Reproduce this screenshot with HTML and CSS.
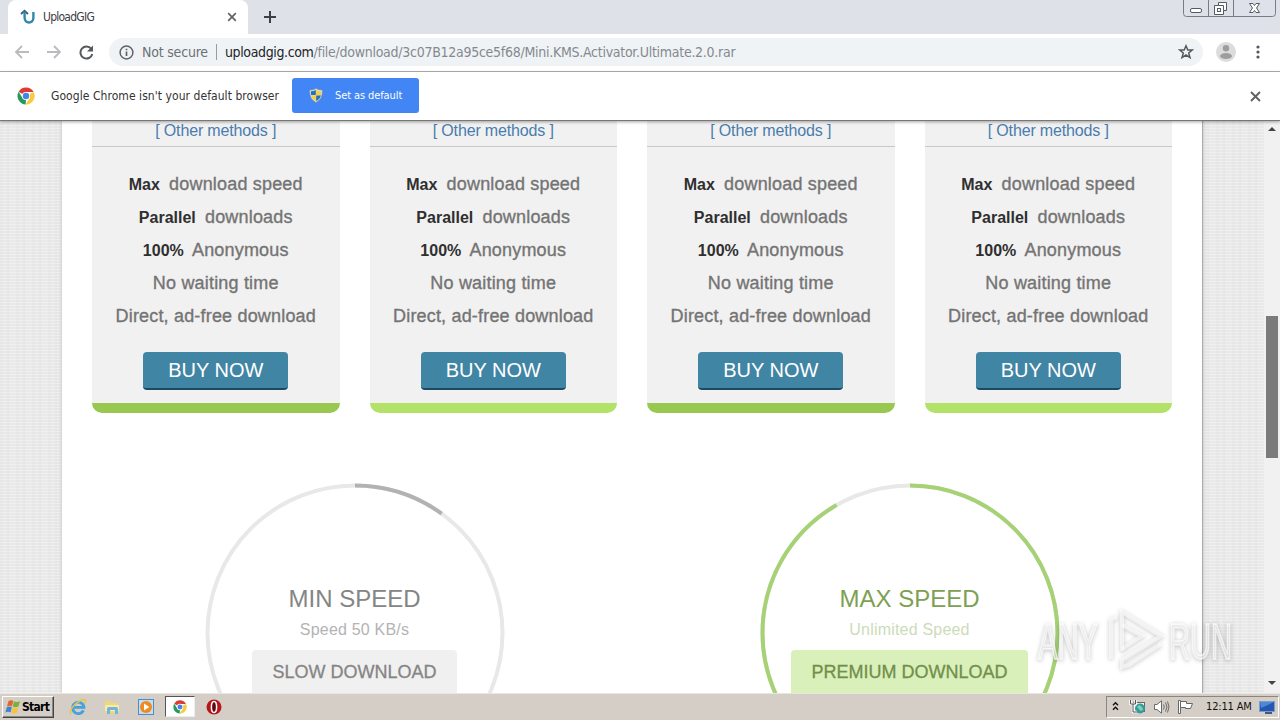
FILE: index.html
```html
<!DOCTYPE html>
<html lang="en">

<head>
    <meta charset="UTF-8">
    <meta name="viewport" content="width=device-width, initial-scale=1.0">
    <title>UploadGIG</title>
    <link rel="stylesheet" href="styles.css">
</head>

<body>
    <svg width="0" height="0" class="defs">
        <symbol id="chrome" viewBox="0 0 18 18">
            <circle cx="9" cy="9" r="8.5" fill="#fff" />
            <path d="M9 9L1.6 4.8A8.5 8.5 0 0 1 16.6 5H9Z" fill="#de3b30" />
            <path d="M9 9L16.6 5A8.5 8.5 0 0 1 8.6 17.5L12.6 11Z" fill="#f8ca3e" />
            <path d="M1.6 4.8L5.5 11L9 13L8.6 17.5A8.5 8.5 0 0 1 1.6 4.8Z" fill="#24995a" />
            <circle cx="9" cy="9" r="4.1" fill="#fff" />
            <circle cx="9" cy="9" r="3.2" fill="#4284ea" />
        </symbol>
    </svg>

    <!-- browser window -->
    <div class="tab-strip">
        <div class="tab">
            <svg class="favicon" width="16" height="16" viewBox="0 0 16 16" fill="none" stroke-width="2.4">
                <path d="M1 5L4.5 1.8L8 5" stroke="#2f5f7c" stroke-width="1.8" />
                <path d="M4.6 2.5V8.8C4.6 15 13.4 15 13.4 8.8V3" stroke="#3288aa" />
            </svg>
            <span class="tab-title">UploadGIG</span>
            <svg width="10" height="10" viewBox="0 0 10 10" stroke="#5f6368" stroke-width="1.7">
                <path d="M1.2 1.2L8.8 8.8M8.8 1.2L1.2 8.8" />
            </svg>
        </div>
        <svg class="new-tab" width="12" height="12" viewBox="0 0 12 12" stroke="#3c4043" stroke-width="2">
            <path d="M6 0V12M0 6H12" />
        </svg>
        <div class="window-buttons">
            <svg width="93" height="17" viewBox="0 0 93 17" fill="none" stroke="#777d86">
                <path d="M.5 0V13.5Q.5 16.5 3.5 16.5H89.5Q92.5 16.5 92.5 13.5V0M25.5 0V16.5M50.5 0V16.5" />
                <rect x="7.5" y="8.5" width="11" height="4" rx="1.5" fill="#fff" stroke="#555b63" />
                <path d="M35.5 2.5H43.5V10.5H40.5V14.5H31.5V5.5H35.5Z" fill="#fff" stroke="#555b63" />
                <path d="M35.5 5.5H40.5V10.5" stroke="#555b63" />
                <rect x="34.5" y="8.5" width="3" height="3" stroke="#555b63" />
                <path d="M66.5 3.5H70L71.5 5.5L73 3.5H76.5L73.5 8L76.5 12.5H73L71.5 10.5L70 12.5H66.5L69.5 8Z" fill="#fff" stroke="#555b63" />
            </svg>
        </div>
    </div>

    <div class="toolbar">
        <svg class="nav" width="16" height="14" viewBox="0 0 16 14" fill="none" stroke="#b9bbbe" stroke-width="1.8">
            <path d="M15 7H2M8 1L2 7L8 13" />
        </svg>
        <svg class="nav" width="16" height="14" viewBox="0 0 16 14" fill="none" stroke="#b9bbbe" stroke-width="1.8">
            <path d="M1 7H14M8 1L14 7L8 13" />
        </svg>
        <svg class="nav reload" width="15" height="15" viewBox="0 0 15 15" fill="none" stroke="#55595e" stroke-width="2">
            <path d="M12.3 4A6 6 0 1 0 13.3 9" />
            <path d="M14 .5V6.5H8Z" fill="#55595e" stroke="none" />
        </svg>
        <div class="omnibox">
            <svg width="15" height="15" viewBox="0 0 15 15" fill="none" stroke="#5f6368" stroke-width="1.5">
                <circle cx="7.5" cy="7.5" r="6.4" />
                <path d="M7.5 6.5V11M7.5 3.8V5.3" stroke-width="1.7" />
            </svg>
            <span class="not-secure">Not secure</span>
            <span class="divider"></span>
            <span class="url"><b>uploadgig.com</b>/file/download/3c07B12a95ce5f68/Mini.KMS.Activator.Ultimate.2.0.rar</span>
            <svg class="star" width="16" height="16" viewBox="0 0 16 16" fill="none" stroke="#55595e" stroke-width="1.5">
                <path d="M8 1.8L9.8 6H14.2L10.7 8.9L12 13.6L8 11L4 13.6L5.3 8.9L1.8 6H6.2Z" />
            </svg>
        </div>
        <svg class="avatar" width="20" height="20" viewBox="0 0 20 20">
            <circle cx="10" cy="10" r="10" fill="#dcdcdc" />
            <circle cx="10" cy="6.2" r="3.2" fill="#9d9d9d" />
            <ellipse cx="10" cy="14" rx="6" ry="3" fill="#9d9d9d" />
        </svg>
        <svg class="menu" width="4" height="14" viewBox="0 0 4 14" fill="#55595e">
            <circle cx="2" cy="2" r="1.6" />
            <circle cx="2" cy="7" r="1.6" />
            <circle cx="2" cy="12" r="1.6" />
        </svg>
    </div>

    <div class="infobar">
        <svg width="18" height="18"><use href="#chrome" /></svg>
        <span class="infobar-text">Google Chrome isn't your default browser</span>
        <div class="default-btn">
            <svg width="14" height="15" viewBox="0 0 14 15">
                <path d="M7 .5Q10 2.3 13.3 2Q14 11 7 14.5Q0 11 .7 2Q4 2.3 7 .5Z" fill="#d9dfe4" stroke="#8292a6" stroke-width=".6" />
                <path d="M6.8 2V7H2V3.2Q4.5 3.3 6.8 2ZM7.2 7.4H11.8Q11 11 7.2 13Z" fill="#f6cf39" />
                <path d="M7.2 2Q9.5 3.3 12 3.2V7H7.2ZM2.2 7.4H6.8V13Q3 11 2.2 7.4Z" fill="#f6cf39" />
                <path d="M6.8 2V7H2V3.2Q4.5 3.3 6.8 2ZM7.2 7.4H11.8Q11 11 7.2 13Z" fill="#246fc0" />
            </svg>
            <span>Set as default</span>
        </div>
        <svg class="infobar-close" width="11" height="11" viewBox="0 0 11 11" stroke="#5f6368" stroke-width="1.9">
            <path d="M1 1L10 10M10 1L1 10" />
        </svg>
    </div>

    <!-- page -->
    <div class="viewport">
        <div class="page">
            <div class="plans">
                <div class="plan">
                    <div class="methods">[ Other methods ]</div>
                    <ul class="features">
                        <li><b>Max</b> download speed</li>
                        <li><b>Parallel</b> downloads</li>
                        <li><b>100%</b> Anonymous</li>
                        <li>No waiting time</li>
                        <li>Direct, ad-free download</li>
                    </ul>
                    <div class="buy">BUY NOW</div>
                </div>
                <div class="plan light">
                    <div class="methods">[ Other methods ]</div>
                    <ul class="features">
                        <li><b>Max</b> download speed</li>
                        <li><b>Parallel</b> downloads</li>
                        <li><b>100%</b> Anonymous</li>
                        <li>No waiting time</li>
                        <li>Direct, ad-free download</li>
                    </ul>
                    <div class="buy">BUY NOW</div>
                </div>
                <div class="plan">
                    <div class="methods">[ Other methods ]</div>
                    <ul class="features">
                        <li><b>Max</b> download speed</li>
                        <li><b>Parallel</b> downloads</li>
                        <li><b>100%</b> Anonymous</li>
                        <li>No waiting time</li>
                        <li>Direct, ad-free download</li>
                    </ul>
                    <div class="buy">BUY NOW</div>
                </div>
                <div class="plan light">
                    <div class="methods">[ Other methods ]</div>
                    <ul class="features">
                        <li><b>Max</b> download speed</li>
                        <li><b>Parallel</b> downloads</li>
                        <li><b>100%</b> Anonymous</li>
                        <li>No waiting time</li>
                        <li>Direct, ad-free download</li>
                    </ul>
                    <div class="buy">BUY NOW</div>
                </div>
            </div>

            <div class="speeds">
                <div class="speed min">
                    <svg class="ring" width="300" height="300" viewBox="0 0 300 300" fill="none" stroke-width="4">
                        <circle cx="150" cy="150" r="147.5" stroke="#e8e8e8" />
                        <circle cx="150" cy="150" r="147.5" stroke="#b2b2b2" pathLength="100" stroke-dasharray="10 90" transform="rotate(-90 150 150)" />
                    </svg>
                    <div class="speed-title">MIN SPEED</div>
                    <div class="speed-sub">Speed 50 KB/s</div>
                    <div class="speed-btn">SLOW DOWNLOAD</div>
                </div>
                <div class="speed max">
                    <svg class="ring" width="300" height="300" viewBox="0 0 300 300" fill="none" stroke-width="4">
                        <circle cx="150" cy="150" r="147.5" stroke="#e8e8e8" />
                        <circle cx="150" cy="150" r="147.5" stroke="#a6d275" pathLength="100" stroke-dasharray="91.7 8.3" transform="rotate(-90 150 150)" />
                    </svg>
                    <div class="speed-title">MAX SPEED</div>
                    <div class="speed-sub">Unlimited Speed</div>
                    <div class="speed-btn">PREMIUM DOWNLOAD</div>
                </div>
            </div>
        </div>
        <div class="scrollbar">
            <span class="arrow up"></span>
            <span class="thumb"></span>
            <span class="arrow down"></span>
        </div>
        <svg class="watermark" width="240" height="84" viewBox="0 0 240 84">
            <text x="4" y="52" textLength="60" lengthAdjust="spacingAndGlyphs">ANY</text>
            <path d="M77 52V13L83 10M88 44V5L127 29L88 53V60L95 58L127 37" />
            <path d="M88 18L108 29L88 42" />
            <text x="135" y="52" textLength="63" lengthAdjust="spacingAndGlyphs">RUN</text>
        </svg>
    </div>

    <!-- taskbar -->
    <div class="taskbar">
        <div class="start">
            <svg width="16" height="16" viewBox="0 0 16 16">
                <path d="M3.5 2Q6 .5 8.3 2L7 7.3Q4.5 6 2 7.5Z" fill="#e5642d" />
                <path d="M9 2.3Q12 3.8 15 2L13.5 7.5Q10.5 9 7.8 7.6Z" fill="#78b23b" />
                <path d="M1.8 8.3Q4.5 6.8 6.8 8.2L5.5 13.5Q3 12 .3 13.6Z" fill="#3c86cf" />
                <path d="M7.6 8.5Q10.4 9.9 13.3 8.3L11.9 13.8Q9 15.3 6.3 13.8Z" fill="#f6c33a" />
            </svg>
            <span>Start</span>
        </div>
        <div class="launch">
            <svg width="18" height="18" viewBox="0 0 18 18" fill="none">
                <path d="M14.5 12.3A5.7 5.7 0 1 1 15 9.3H5" stroke="#42a3de" stroke-width="2.8" />
                <path d="M2 16C-1 13 8 2 15.5 1.5Q18 2 15.5 5.5" stroke="#ecc341" stroke-width="1.4" />
            </svg>
        </div>
        <div class="launch">
            <svg width="18" height="18" viewBox="0 0 18 18">
                <path d="M2 3H7L8 5H15V15H2Z" fill="#f2d778" />
                <path d="M2 7H16V13H2Z" fill="#f9eaa6" />
                <path d="M4 16V11Q4 9 6 9H13Q15 9 15 11V16H12V12H7V16Z" fill="#6eb6dc" />
            </svg>
        </div>
        <div class="launch">
            <svg width="18" height="18" viewBox="0 0 18 18">
                <rect x="1.5" y="1.5" width="15" height="15" fill="#c3def3" stroke="#4b8dc6" />
                <circle cx="9" cy="9" r="6" fill="#f08a1d" />
                <path d="M7 5.5L12.3 9L7 12.5Z" fill="#fff" />
            </svg>
        </div>
        <div class="launch active">
            <svg width="14" height="14"><use href="#chrome" /></svg>
        </div>
        <div class="launch">
            <svg width="16" height="16" viewBox="0 0 16 16">
                <circle cx="8" cy="8" r="7.5" fill="#b91519" />
                <ellipse cx="8" cy="8" rx="2.6" ry="5.5" fill="#5e0a0c" stroke="#fff" stroke-width="1.5" />
            </svg>
        </div>
        <div class="tray">
            <svg width="7" height="11" viewBox="0 0 7 11" fill="none" stroke="#111" stroke-width="1.4">
                <path d="M1 4.2L3.5 1.7L6 4.2M1 8.7L3.5 6.2L6 8.7" />
            </svg>
            <svg class="net" width="17" height="16" viewBox="0 0 17 16">
                <rect x="4.5" y="3.5" width="11" height="9" fill="#f4f4f4" stroke="#666" />
                <circle cx="11" cy="9.5" r="5" fill="#319b9d" />
                <path d="M8 8Q10 5 12 7T14 11Q11 13 10 10Z" fill="#83d0b1" />
                <path d="M1.5 1V5H6.5V1M4 5V13H8" fill="none" stroke="#fff" stroke-width="2.5" />
                <path d="M1.5 1V5H6.5V1M4 5V13H8" fill="none" stroke="#555" />
            </svg>
            <svg class="sound" width="17" height="14" viewBox="0 0 17 14" fill="none" stroke="#6b6b6b">
                <path d="M1.5 4.5H4L8.5 .8V13.2L4 9.5H1.5Z" fill="#fff" />
                <path d="M10.5 4.5Q12 7 10.5 9.5M12.5 2.5Q15.5 7 12.5 11.5M14.5 1.5Q17.5 7 14.5 12.5" />
            </svg>
            <svg class="flag" width="17" height="16" viewBox="0 0 17 16" fill="#fff" stroke="#666">
                <path d="M1.5 1.5H3.5V14.5H1.5Z" />
                <path d="M3.5 2.5H9.5V4.5H15.5L13.5 9.5H8.5V8.5H3.5Z" />
            </svg>
            <span class="clock">12:11 AM</span>
            <svg width="16" height="14" viewBox="0 0 16 14">
                <rect x=".5" y="1.5" width="15" height="10" fill="#2457b2" stroke="#7e9cca" />
                <path d="M1 2H15L2 8Z" fill="#4e88d8" />
                <path d="M6 13H13" stroke="#45577a" stroke-width="2" />
            </svg>
        </div>
    </div>
</body>

</html>
```
FILE: styles.css
```css
body {
    margin: 0;
    width: 1280px;
    height: 720px;
    overflow: hidden;
    display: flex;
    flex-direction: column;
    font-family: "Liberation Sans", Arial, sans-serif;
    background-color: #fff;
}

svg {
    display: block;
    flex-shrink: 0;
}

.defs {
    position: absolute;
}

/* browser window */
.tab-strip {
    height: 34px;
    flex-shrink: 0;
    display: flex;
    background-color: #dee1e7;
}

.tab {
    width: 240px;
    box-sizing: border-box;
    margin-left: 8px;
    padding: 0 11px 0 12px;
    display: flex;
    align-items: center;
    background-color: #fff;
    border-radius: 8px 8px 0 0;
}

.tab-title {
    flex: 1;
    margin-left: 7px;
    font: 12px "DejaVu Sans Condensed", sans-serif;
    letter-spacing: -0.75px;
    color: #3c4043;
}

.new-tab {
    margin: 11px 0 0 16px;
}

.window-buttons {
    margin: 0 4px 0 auto;
}

.toolbar {
    height: 36px;
    flex-shrink: 0;
    padding-bottom: 1px;
    display: flex;
    align-items: center;
    border-bottom: 1px solid #b0b0b0;
}

.nav {
    margin-left: 14px;
}

.nav + .nav {
    margin-left: 16px;
}

.nav.reload {
    margin-left: 17px;
}

.omnibox {
    width: 1094px;
    height: 28px;
    box-sizing: border-box;
    margin-left: 15px;
    padding: 0 9px 0 10px;
    display: flex;
    align-items: center;
    border-radius: 14px;
    background-color: #f0f3f6;
    font: 14px "DejaVu Sans Condensed", sans-serif;
    line-height: 24px;
    color: #85898e;
    white-space: nowrap;
}

.not-secure {
    width: 74px;
    margin: -1px 0 0 8px;
    letter-spacing: -0.2px;
    color: #6c7075;
}

.divider {
    width: 1px;
    height: 16px;
    background-color: #999da2;
}

.url {
    flex: 1;
    margin: -1px 0 0 8px;
    letter-spacing: -0.27px;
}

.url b {
    font-weight: normal;
    letter-spacing: -0.37px;
    color: #222427;
}

.avatar {
    margin-left: 13px;
}

.menu {
    margin-left: 20px;
}

.infobar {
    position: relative;
    z-index: 1;
    height: 48px;
    flex-shrink: 0;
    padding-left: 17px;
    display: flex;
    align-items: center;
    background-color: #fff;
    border-bottom: 1px solid #777;
    box-shadow: 0 1px 3px rgba(0, 0, 0, 0.35);
    font: 12px "DejaVu Sans Condensed", sans-serif;
}

.infobar-text {
    width: 241px;
    margin-left: 16px;
    letter-spacing: 0.06px;
    white-space: nowrap;
    color: #333;
}

.default-btn {
    width: 127px;
    height: 35px;
    box-sizing: border-box;
    margin-top: -1px;
    padding-left: 17px;
    display: flex;
    align-items: center;
    gap: 12px;
    background-color: #4285f4;
    border-radius: 3px;
    color: #fff;
    font-size: 11px;
    letter-spacing: -0.1px;
    white-space: nowrap;
}

.infobar-close {
    margin: 0 19px 0 auto;
}

/* page */
.viewport {
    position: relative;
    height: 572px;
    flex-shrink: 0;
    overflow: hidden;
    display: flex;
    background-color: #e9e9e9;
    background-image:
        repeating-linear-gradient(0deg, rgba(255, 255, 255, 0.3) 0 1px, transparent 1px 3px),
        repeating-linear-gradient(90deg, rgba(0, 0, 0, 0.015) 0 3px, transparent 3px 7px, rgba(0, 0, 0, 0.02) 7px 9px, transparent 9px 16px);
}

.page {
    width: 1140px;
    margin-left: 62px;
    background-color: #fff;
    border-right: 1px solid #aaa;
    box-shadow: 0 0 4px rgba(0, 0, 0, 0.2);
}

.plans {
    padding: 0 30px;
    display: flex;
    gap: 30px;
}

.plan {
    flex: 1;
    height: 292px;
    box-sizing: border-box;
    display: flex;
    flex-direction: column;
    align-items: center;
    background-color: #f1f1f1;
    border-bottom: 10px solid #98c84f;
    border-radius: 0 0 10px 10px;
    text-align: center;
}

.plan.light {
    border-bottom-color: #b2e268;
}

.methods {
    width: 100%;
    height: 25px;
    line-height: 19px;
    border-bottom: 1px solid #c8c8c8;
    font-size: 16px;
    letter-spacing: -0.15px;
    color: #4a7cae;
}

.features {
    margin: 21px 0 19px;
    padding: 0;
    list-style: none;
    font-size: 18px;
    line-height: 33px;
    letter-spacing: 0.18px;
    color: #747474;
    white-space: nowrap;
    -webkit-text-stroke: 0.35px;
}

.features b {
    margin-right: 4px;
    font-size: 16px;
    letter-spacing: 0;
    color: #2f2f2f;
    -webkit-text-stroke: 0;
}

.buy {
    width: 145px;
    height: 38px;
    box-sizing: border-box;
    line-height: 36px;
    background-color: #4185a4;
    border-bottom: 2px solid #1d4a61;
    border-radius: 4px;
    font-size: 20px;
    color: #fff;
}

.speeds {
    padding: 70px 15px 0;
    display: flex;
}

.speed {
    position: relative;
    flex: 1;
    display: flex;
    flex-direction: column;
    align-items: center;
    color: #858585;
}

/* ring goes around the texts */
.ring {
    position: absolute;
    top: 0;
    left: 127.5px;
}

.speed-title {
    margin-top: 102px;
    line-height: 28px;
    font-size: 24px;
}

.speed-sub {
    margin-top: 5px;
    line-height: 24px;
    font-size: 16px;
    letter-spacing: 0.2px;
    color: #b3b3b3;
}

.speed-btn {
    height: 60px;
    margin-top: 8px;
    padding: 0 20px;
    line-height: 45px;
    background-color: #f0f0f0;
    border-radius: 4px;
    font-size: 18px;
    -webkit-text-stroke: 0.3px;
}

.max {
    color: #7ea053;
}

.max .speed-sub {
    color: #ccdcb8;
}

.max .speed-btn {
    background-color: #d9f0bb;
    color: #728f4a;
}

.scrollbar {
    width: 16px;
    margin-left: auto;
    display: flex;
    flex-direction: column;
    align-items: center;
    background-color: #f1f1f1;
}

.thumb {
    width: 12px;
    height: 142px;
    margin: 185px 0 auto;
    background-color: #7b7b7b;
}

.arrow {
    border: 4px solid transparent;
}

.arrow.up {
    margin-top: 2px;
    border-bottom-color: #444;
}

.arrow.down {
    margin-bottom: 4px;
    border-top-color: #444;
}

.watermark {
    position: absolute;
    left: 1034px;
    top: 486px;
    fill: rgba(255, 255, 255, 0.5);
    stroke: rgba(255, 255, 255, 0.6);
    filter: drop-shadow(0 1px 2px rgba(0, 0, 0, 0.35));
    font: 50px "Liberation Sans", sans-serif;
}

.watermark text {
    stroke-width: 2;
}

.watermark path {
    fill: none;
    stroke-width: 4;
}

/* taskbar */
.taskbar {
    height: 27px;
    flex-shrink: 0;
    box-sizing: border-box;
    padding: 1px 1px 2px 2px;
    display: flex;
    align-items: center;
    background-color: #d4cec7;
    border-top: 1px solid #e9e6e2;
}

.start {
    width: 52px;
    height: 22px;
    box-sizing: border-box;
    margin-right: 9px;
    padding-left: 2px;
    display: flex;
    align-items: center;
    gap: 1px;
    border: 1px solid;
    border-color: #fff #444 #444 #fff;
    box-shadow: inset -1px -1px 0 #888;
    font: bold 12px "DejaVu Sans Condensed", sans-serif;
    letter-spacing: -0.7px;
    color: #000;
}

.launch {
    width: 30px;
    height: 21px;
    box-sizing: border-box;
    margin-right: 4px;
    display: flex;
    align-items: center;
    justify-content: center;
}

.launch.active {
    background-color: #fff;
    border: 1px solid;
    border-color: #555 #eee #eee #555;
}

.tray {
    width: 173px;
    height: 22px;
    box-sizing: border-box;
    margin-left: auto;
    padding-left: 5px;
    display: flex;
    align-items: center;
    border: 1px solid;
    border-color: #8b8780 #fff #fff #8b8780;
}

.net {
    margin-left: 10px;
}

.sound {
    margin-left: 7px;
}

.flag {
    margin-left: 7px;
}

.clock {
    width: 50px;
    margin-left: 12px;
    font: 11px "DejaVu Sans Condensed", sans-serif;
    letter-spacing: -0.15px;
    white-space: nowrap;
    color: #111;
}

.clock + svg {
    margin-left: 3px;
}
```
